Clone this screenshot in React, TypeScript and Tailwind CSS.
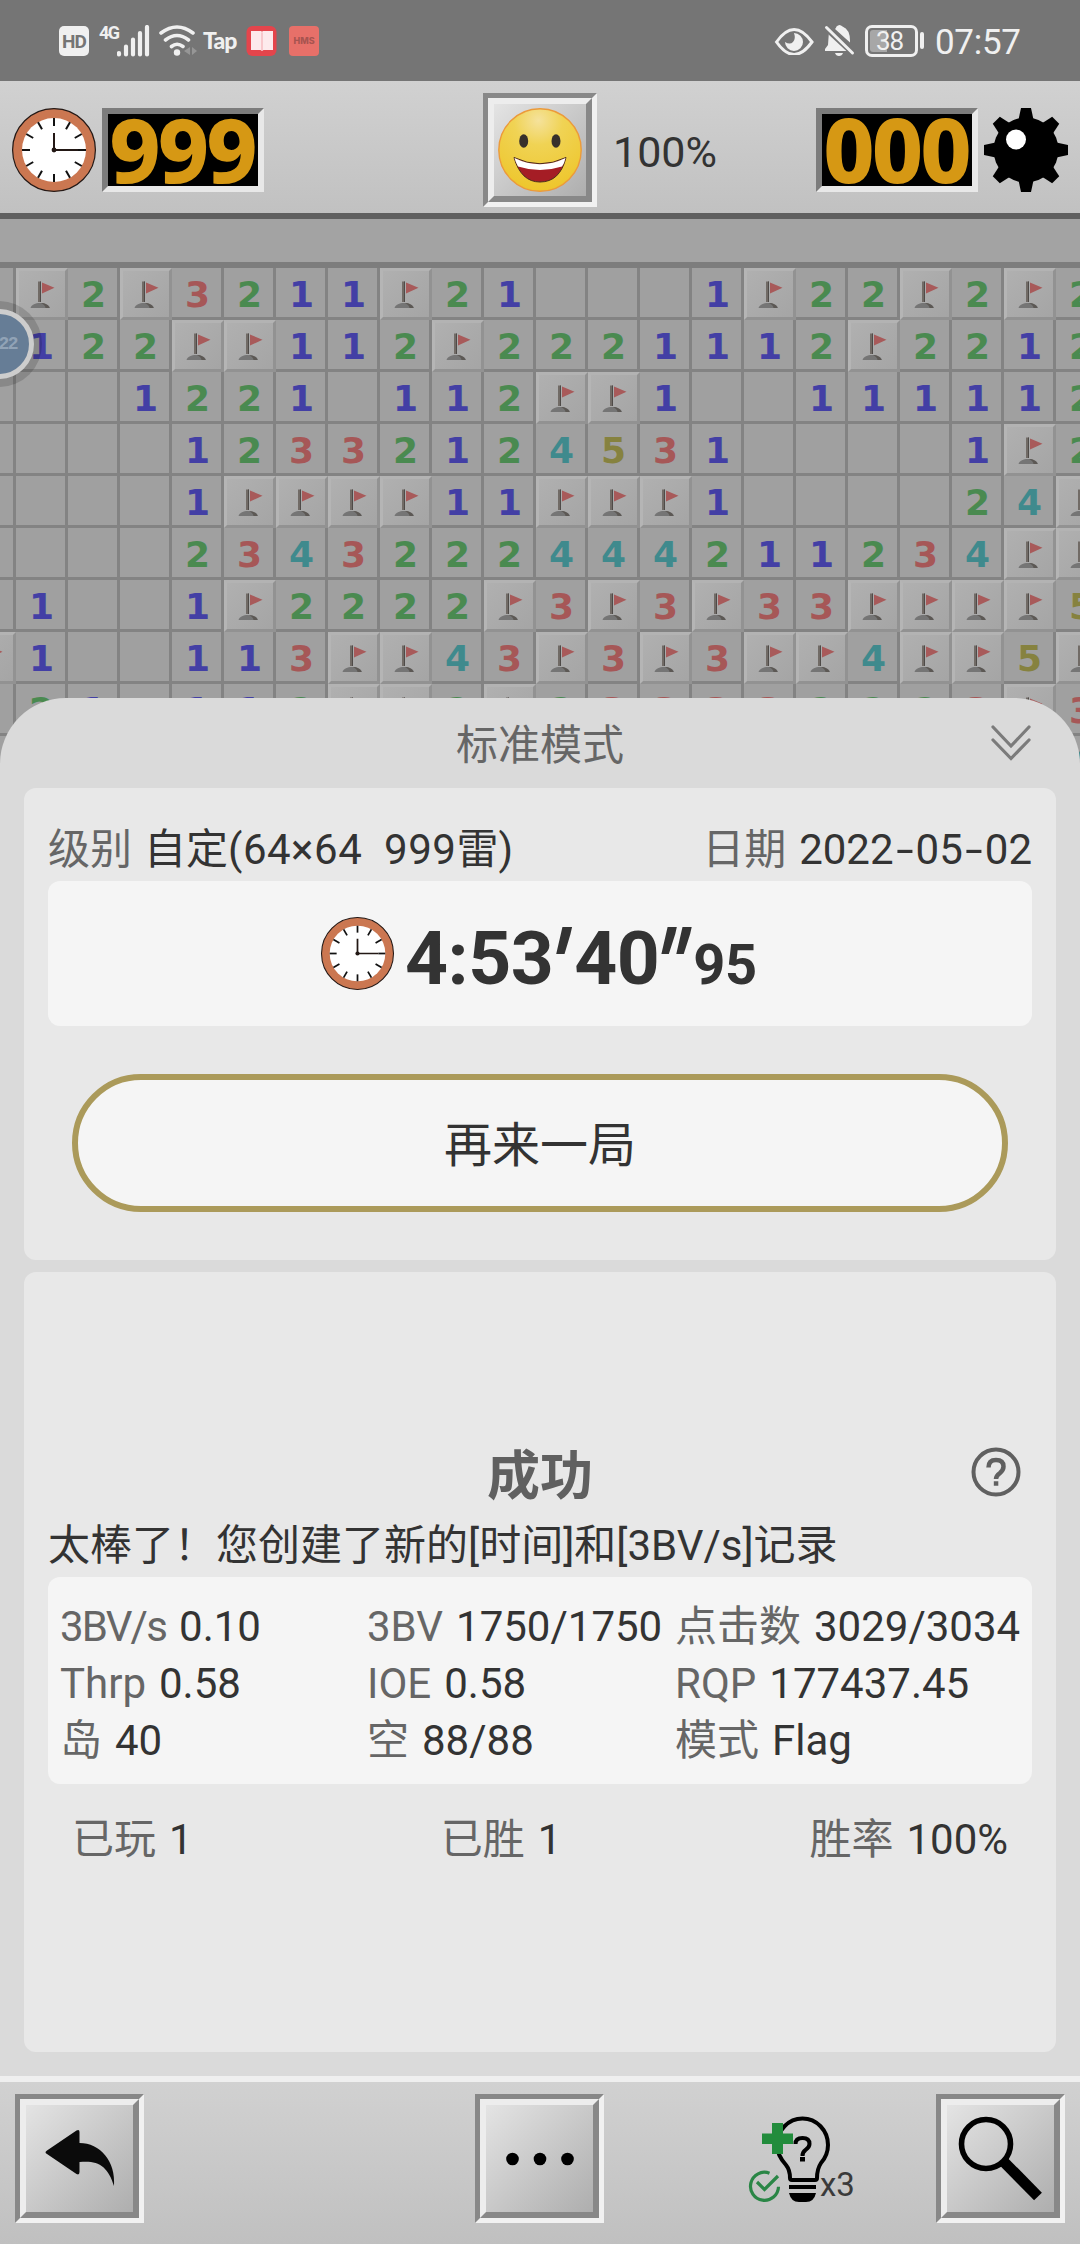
import type { ReactNode } from "react";

const boardRows = [
  ".F2F3211F21...1F22F2F2",
  ".122FF112F2221112F2212",
  "...1221.112FF1..111112",
  "....12332124531....1F2",
  "....1FFFF11FFF1....24F",
  "....2343222444211234FF",
  ".1..1F2222F3F3F33FFFF5",
  "F1..113FF43F3F3FF4FF5F",
  ".21.112FF2F233332223F3",
  ".....................4",
];

const digitColors: Record<string, string> = {
  "1": "text-[#433fa5]",
  "2": "text-[#4a8a50]",
  "3": "text-[#a65757]",
  "4": "text-[#3f8a8d]",
  "5": "text-[#86823f]",
};

const stats = [
  { label: "3BV/s", value: "0.10" },
  { label: "3BV", value: "1750/1750" },
  { label: "点击数", value: "3029/3034" },
  { label: "Thrp", value: "0.58" },
  { label: "IOE", value: "0.58" },
  { label: "RQP", value: "177437.45" },
  { label: "岛", value: "40" },
  { label: "空", value: "88/88" },
  { label: "模式", value: "Flag" },
];

const totals = [
  { label: "已玩", value: "1" },
  { label: "已胜", value: "1" },
  { label: "胜率", value: "100%" },
];

const Clock = ({ className }: { className: string }) => {
  const ticks = [0, 30, 60, 90, 120, 150, 180, 210, 240, 270, 300, 330];
  return (
    <svg viewBox="0 0 84 84" className={className}>
      <circle cx="42" cy="42" r="41.4" fill="#cb7751" stroke="#231815" strokeWidth="1.2" />
      <circle cx="42" cy="42" r="32" fill="#fff" />
      {ticks.map((deg) => (
        <path
          key={deg}
          d="M42 10v8"
          stroke="#111"
          strokeWidth="2"
          transform={`rotate(${deg} 42 42)`}
        />
      ))}
      <path d="M42 25v17h24" fill="none" stroke="#231815" strokeWidth="2" />
      <circle cx="42" cy="42" r="2.4" fill="#231815" />
    </svg>
  );
};

const Smiley = () => (
  <svg viewBox="0 0 84 84" className="size-[84px]">
    <defs>
      <radialGradient id="face" cx="0.48" cy="0.14" r="0.85">
        <stop offset="0" stopColor="#f5e29c" />
        <stop offset="0.35" stopColor="#f0d354" />
        <stop offset="1" stopColor="#eec62c" />
      </radialGradient>
    </defs>
    <circle cx="42" cy="42" r="41.2" fill="url(#face)" stroke="#ec9a3a" strokeWidth="1.4" />
    <ellipse cx="25.7" cy="33" rx="4.5" ry="6.7" fill="#37302b" />
    <ellipse cx="58" cy="33" rx="4.5" ry="6.7" fill="#37302b" />
    <path d="M16 49.500Q42 62 68 49.500Q62 74 42 74Q23 74 16 49.500z" fill="#a51d25" stroke="#4a2c1c" strokeWidth="1" />
    <path d="M16.500 50Q42 62.500 67.500 50Q66.500 55 64 58.500Q42 65.500 20 58.500Q17.500 54 16.500 50z" fill="#fff" />
  </svg>
);

const Mine = () => (
  <svg viewBox="-42 -42 84 84" className="size-[84px]">
    {[0, 45, 90, 135, 180, 225, 270, 315].map((deg) => (
      <path key={deg} d="M-5-42H5L8-28H-8z" transform={`rotate(${deg})`} />
    ))}
    <circle r="32.5" />
    <circle cx="-10" cy="-10.5" r="10" fill="#fff" />
  </svg>
);

const Flag = () => (
  <svg viewBox="0 0 52 52" className="-ml-[3px] -mt-[3px] size-[52px] shrink-0">
    <path d="M14.500 40c1-3.500 5-5 9.500-5s9 1.500 10 5z" fill="#757575" />
    <path d="M25 35c4 0 8 2 8.500 5h-4c0-2-2-4-4.500-5z" fill="#5c5854" />
    <path d="M22 13.500h3V34h-3z" fill="#716b66" />
    <path d="M24 13.500h1V34h-1z" fill="#4f4b48" />
    <path d="M26 14.500L38.500 19.800L26 25.500z" fill="#a85a5a" />
  </svg>
);

const Cell = ({ value }: { value: string }) => {
  if (value === "F") {
    return (
      <div className="size-[52px] shrink-0 overflow-hidden border-3 border-t-[#b3b3b3] border-l-[#b5b5b5] border-r-[#929292] border-b-[#929292] bg-linear-to-br from-[#b0b0b0] to-[#a5a5a5]">
        <Flag />
      </div>
    );
  }
  return (
    <div
      className={`flex size-[52px] shrink-0 items-center justify-center border-r-3 border-b-3 border-[#838383] bg-[#a0a0a0] pt-1 pl-0.5 text-[36px] leading-none font-bold ${digitColors[value] ?? ""}`}
    >
      {value === "." ? "" : value}
    </div>
  );
};

const Led = ({ value }: { value: string }) => (
  <div className="flex h-[84px] w-[162px] items-center justify-center border-6 border-t-[#7c7c7c] border-l-[#7c7c7c] border-r-[#e8e8e8] border-b-[#e8e8e8] bg-black">
    <span className="mr-[2px] -mt-[3px] font-['Noto_Sans'] text-[89px] leading-[72px] font-extrabold tracking-[-3px] text-[#d69814]">
      {value}
    </span>
  </div>
);

const BevelButton = ({ className, children }: { className: string; children: ReactNode }) => (
  <button
    className={`border-5 border-t-[#888] border-l-[#888] border-r-[#f1f1f1] border-b-[#f1f1f1] ${className}`}
  >
    <span className="flex size-full items-center justify-center border-6 border-t-[#ededed] border-l-[#ededed] border-r-[#888] border-b-[#888] bg-linear-to-br from-[#e4e4e4] to-[#aeaeae]">
      {children}
    </span>
  </button>
);

const StatusBar = () => (
  <div className="flex h-[81px] items-start justify-between bg-[#757575] pt-[24px] pr-[57px] pl-[59px] text-[#f0f0f0]">
    <div className="flex">
      <div className="mt-0.5 flex h-[30px] w-[30px] items-center justify-center rounded-[5px] bg-[#f0f0f0] text-[19px] leading-none font-bold tracking-[-1px] text-[#757575]">
        HD
      </div>
      <span className="ml-[10px] w-[18px] text-[18px] leading-[18px] font-bold tracking-[-1.500px]">4G</span>
      <svg viewBox="117 25 34 32" className="mt-px h-[32px] w-[34px]" stroke="#f0f0f0" strokeWidth="4.200" strokeLinecap="round">
        <path d="M119 53v1.500M126 46.500v8M133 39.500v15M140 33v21.500M147 27v27.500" />
      </svg>
      <svg viewBox="158 24 40 33" className="ml-[7px] h-[33px] w-[40px]" fill="none" stroke="#f0f0f0" strokeWidth="3.600" strokeLinecap="round">
        <path d="M161 33q16-12 32 0M165.500 40q11.500-9 23 0M171.500 46.500q5.500-4.500 11.500 0" />
        <circle cx="177" cy="52.500" r="3.200" fill="#f0f0f0" stroke="none" />
        <path d="M190 47v8l-6-4zM192 47v8l5-4z" fill="#969696" stroke="none" />
      </svg>
      <span className="ml-[5px] w-[35px] font-[Lato] text-[23px] leading-[33px] font-black tracking-[-1px]">Tap</span>
      <svg viewBox="246 26 31 30" className="mt-0.5 ml-[8px] h-[30px] w-[31px]">
        <rect x="246.500" y="26" width="30" height="30" rx="6" fill="#e4454c" />
        <path d="M251 31h10.500l.5 2 .5-2H273v19h-9.500l-1.500 1-1.500-1H251z" fill="#fdeaec" />
        <path d="M262 33v18" stroke="#f3a6ac" strokeWidth="1" />
      </svg>
      <div className="mt-0.5 ml-[12px] flex h-[30px] w-[30px] items-center justify-center rounded-[4px] bg-[#e77069] font-[Inter] text-[9px] font-extrabold text-[#a85450]">
        HMS
      </div>
    </div>
    <div className="flex">
      <svg viewBox="773 26 40 28" className="mt-[3px] h-[28px] w-[40px]">
        <path d="M775.500 41Q793 16 811 41Q793 66 775.500 41z" fill="none" stroke="#f0f0f0" strokeWidth="3" />
        <path d="M793 32a9 9 0 1 1-9 9q5 3 8 0t1-9z" fill="#f0f0f0" />
      </svg>
      <svg viewBox="823 24 31 33" className="ml-[10px] h-[33px] w-[31px]" fill="#f0f0f0">
        <path d="M834 29q1-1 1.500-2.500q3-3 6 0q8 3 7.500 16zM828 31l22 20h-26v-2l3-4zM834 53h8q-1 3-4 3t-4-3z" />
        <path d="M825 28l27 25" stroke="#757575" strokeWidth="6" />
        <path d="M825.500 27.500L851.500 53" stroke="#f0f0f0" strokeWidth="3" strokeLinecap="round" />
      </svg>
      <div className="mt-px ml-[10px] flex h-[32px] w-[53px] rounded-[7px] border-3 border-[#f0f0f0] p-[2px]">
        <div className="h-full w-[17px] rounded-l-[3px] bg-[#a7a7a7]" />
        <span className="-ml-[11px] text-[26px] leading-[23px] tracking-[-1px]">38</span>
      </div>
      <div className="mt-[8px] ml-[2px] h-[17px] w-[4px] rounded-full bg-[#f0f0f0]" />
      <span className="ml-[11px] w-[88px] text-[35px] leading-[37px] tracking-[-0.300px]">07:57</span>
    </div>
  </div>
);

const GameHeader = () => (
  <div className="flex h-[138px] justify-between border-b-6 border-[#606060] bg-linear-to-b from-[#d1d1d1] to-[#c1c1c1] pr-[12px] pl-[12px]">
    <div className="mt-[27px] flex w-[471px] gap-1.5">
      <Clock className="size-[84px]" />
      <Led value="999" />
    </div>
    <div className="mt-[12px] flex flex-1 items-start">
      <BevelButton className="size-[114px]">
        <Smiley />
      </BevelButton>
      <span className="mt-[34px] ml-[16px] text-[43px] leading-[50px] text-[#333]">100%</span>
    </div>
    <div className="mt-[27px] flex gap-1.5">
      <Led value="000" />
      <Mine />
    </div>
  </div>
);

const Board = () => (
  <div className="relative h-[569px] overflow-hidden bg-[#a3a3a3] pt-[43px]">
    <div className="h-[6px] bg-[#7d7d7d]" />
    <div className="-ml-[36px] font-['DejaVu_Sans',sans-serif]">
      {boardRows.map((row, y) => (
        <div key={y} className="flex">
          {row.split("").map((value, x) => (
            <Cell key={x} value={value} />
          ))}
        </div>
      ))}
    </div>
    {/* floating helper ball, half hidden by the screen edge */}
    <div className="absolute top-[82px] -left-[44px] size-[86px] rounded-full bg-black/15 p-[8px]">
      <div className="flex size-full items-center justify-end rounded-full border-5 border-[#cdcdcd] bg-[#667d96] pr-[12px] font-['Liberation_Mono'] text-[18px] font-bold tracking-[-1.500px] text-[#91a3b6]">
        22
      </div>
    </div>
  </div>
);

const Pair = ({ label, value }: { label: string; value: string }) => (
  <p className="flex gap-[13px] whitespace-nowrap">
    <span className={label === "3BV/s" ? "tracking-[-1.800px] text-[#666]" : "text-[#666]"}>{label}</span>
    <span>{value}</span>
  </p>
);

const Dash = () => <span className="inline-block w-[22px] scale-x-150 text-center">-</span>;

const LevelCard = () => (
  <div className="h-[472px] rounded-xl bg-[#e8e8e8] px-6 pt-[29px]">
    <div className="flex h-[64px] items-center justify-between">
      <p className="flex gap-[12px] whitespace-pre">
        <span className="text-[#666]">级别</span>
        <span>
          自定<span className="tracking-[0.500px]">(64×64  999</span>雷)
        </span>
      </p>
      <p className="flex gap-[13px]">
        <span className="text-[#666]">日期</span>
        <span>
          2022
          <Dash />
          05
          <Dash />
          02
        </span>
      </p>
    </div>
    <div className="flex h-[145px] items-center rounded-xl bg-[#f5f5f5] pl-[273px]">
      <Clock className="size-[73px]" />
      <p className="ml-[11px] flex items-baseline pt-2.5 leading-none font-bold whitespace-nowrap">
        <span className="text-[75px] tracking-[-0.500px]">
          4:53
          <span className="-ml-[5px] mr-[4px] inline-block w-[22px] origin-top translate-x-[10px] -translate-y-[3px] -skew-x-14 scale-x-125 scale-y-135 text-center">′</span>
          40
          <span className="-ml-[5px] mr-[2px] inline-block w-[37px] origin-top translate-x-[9px] -translate-y-[3px] -skew-x-14 scale-x-125 scale-y-135 text-center">″</span>
        </span>
        <span className="text-[56px] tracking-[-0.500px]">95</span>
      </p>
    </div>
    <div className="px-6 pt-[48px]">
      <button className="h-[138px] w-full rounded-full border-6 border-[#ab9a5a] bg-[#f5f5f5] pt-1 text-[48px]">
        再来一局
      </button>
    </div>
  </div>
);

const ResultCard = () => (
  <div className="h-[780px] rounded-xl bg-[#e8e8e8] px-6 pt-[160px]">
    <div className="grid h-[80px] grid-cols-3 items-center">
      <h2 className="col-start-2 pt-2.5 text-center text-[53px] leading-none font-bold text-[#606060]">成功</h2>
      <svg viewBox="0 0 50 50" className="mr-[11px] size-[50px] justify-self-end" fill="none" stroke="#606060">
        <circle cx="25" cy="25" r="22.500" strokeWidth="4" />
        <path d="M17.500 20.500q0-7.500 7.500-7.500t7.500 6.500q0 3.500-3.500 6.500q-4 3-4 6" strokeWidth="4.500" />
        <path d="M22.800 36.500h4.500" strokeWidth="4.500" />
      </svg>
    </div>
    <p className="h-[65px] pt-px leading-[65px] whitespace-nowrap">太棒了！您创建了新的[时间]和[3BV/s]记录</p>
    <div className="grid h-[207px] grid-cols-[307px_308px_1fr] auto-rows-[57px] content-center items-center rounded-xl bg-[#f5f5f5] pt-[5px] pl-[12px]">
      {stats.map((item) => (
        <Pair key={item.label} label={item.label} value={item.value} />
      ))}
    </div>
    <div className="flex h-[110px] items-center justify-between px-6">
      {totals.map((item) => (
        <Pair key={item.label} label={item.label} value={item.value} />
      ))}
    </div>
  </div>
);

const ResultSheet = () => (
  <div className="relative -mt-[90px] h-[1378px] rounded-t-[66px] bg-[#dadada] px-6 text-[42px] leading-[57px] text-[#333]">
    <div className="grid h-[90px] grid-cols-3 items-center">
      <span className="col-start-2 pt-1 text-center text-[#666]">标准模式</span>
      <svg viewBox="0 0 42 38" className="mr-[24px] h-[38px] w-[42px] justify-self-end" fill="none" stroke="#7b7b7b" strokeWidth="3.200" strokeLinecap="round">
        <path d="M3 3l18 19L39 3M3 16l18 18.500L39 16" />
      </svg>
    </div>
    <div className="flex flex-col gap-3">
      <LevelCard />
      <ResultCard />
    </div>
  </div>
);

const HintButton = () => (
  <div className="flex w-[108px] items-end">
    <svg viewBox="748 2114 72 90" className="h-[90px] w-[72px] shrink-0 overflow-visible">
      <path
        d="M790 2176q0-8-4-13q-9-10-9-20a25.500 26.500 0 1 1 51 0q0 10-7 18q-4 6-4 15q0 2-2 2h-23q-2 0-2-2z"
        fill="none"
        stroke="#000"
        strokeWidth="4"
      />
      <path d="M789 2183h27v4h-27zM789 2191h27q-2 9-10 9h-7q-8 0-10-9z" />
      <path d="M795.500 2142q0-6 7-6t7 6q0 3-4 6q-3 2-3 6" fill="none" stroke="#000" strokeWidth="4" />
      <path d="M800 2155h5v4.500h-5z" />
      <path d="M772 2121h11v10.500h10v10.500h-10v10h-11v-10h-10v-10.500h10z" fill="#228c3c" />
      <path d="M769.500 2171.200a14 14 0 1 0 9 13.500" fill="none" stroke="#2a8646" strokeWidth="3.200" />
      <path d="M757 2180l7.500 7.500L778 2174" fill="none" stroke="#2a8646" strokeWidth="3.200" />
    </svg>
    <span className="mb-[2px] text-[33px] leading-[38px] text-[#3a3a3a]">x3</span>
  </div>
);

const Toolbar = () => (
  <div className="flex h-[168px] items-start border-t-6 border-[#efefef] bg-linear-to-b from-[#d1d1d1] to-[#c0c0c0] px-[15px] pt-[12px]">
    <BevelButton className="size-[129px]">
      <svg viewBox="26 2105 107 107" className="size-[107px]">
        <path
          d="M47 2150.500L76.500 2130.500Q79.500 2129 79.500 2132V2143C100 2143 116 2161 114 2186C108 2166 98 2160 79.500 2162V2172Q79.500 2175.500 76.500 2174L47 2154Q44 2152.300 47 2150.500z"
          fill="#0b0b0b"
        />
      </svg>
    </BevelButton>
    <BevelButton className="ml-[331px] size-[129px]">
      <svg viewBox="0 0 68 14" className="h-[14px] w-[68px]">
        <circle cx="6.500" cy="7" r="6.300" />
        <circle cx="34" cy="7" r="6.300" />
        <circle cx="61.500" cy="7" r="6.300" />
      </svg>
    </BevelButton>
    <div className="mt-[22px] ml-[144px]">
      <HintButton />
    </div>
    <BevelButton className="ml-auto size-[129px]">
      <svg viewBox="947 2105 107 107" className="size-[107px]" fill="none" stroke="#000">
        <circle cx="986" cy="2144" r="24.500" strokeWidth="5.600" />
        <path d="M1003 2161l35 35.500" strokeWidth="11" />
      </svg>
    </BevelButton>
  </div>
);

export default function App() {
  return (
    <div className="flex h-[2244px] w-[1080px] flex-col overflow-hidden font-[Roboto,'Noto_Sans_CJK_SC',sans-serif]">
      <StatusBar />
      <GameHeader />
      <Board />
      <ResultSheet />
      <Toolbar />
    </div>
  );
}
